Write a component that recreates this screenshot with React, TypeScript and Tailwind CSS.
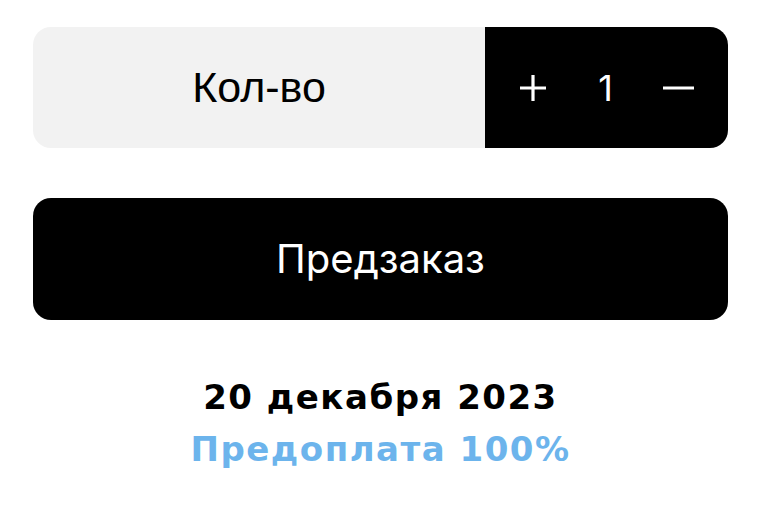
import { useState } from 'react';

export default function App() {
  const [qty, setQty] = useState(1);

  return (
    <div className="min-h-screen bg-white pl-[33px] pt-[27px] font-['Inter','Noto_Sans',sans-serif]">
      <div className="w-[695px]">
        <div className="flex h-[121px] overflow-hidden rounded-[18px]">
          <div className="flex flex-1 items-center justify-center bg-[#f2f2f2] text-[43px] text-black font-['Liberation_Sans',sans-serif]">
            Кол-во
          </div>
          <div className="flex w-[243px] items-center justify-between bg-black pl-[33px] pr-[34px] text-white">
            <button onClick={() => setQty((q) => q + 1)} aria-label="Добавить">
              <svg width="30" height="30" viewBox="0 0 30 30" stroke="currentColor" strokeWidth="3.2" fill="none">
                <path d="M15 2v26M2 15h26" />
              </svg>
            </button>
            <span className="text-[36px] leading-none">{qty}</span>
            <button onClick={() => setQty((q) => Math.max(1, q - 1))} aria-label="Убрать">
              <svg width="31" height="30" viewBox="0 0 31 30" stroke="currentColor" strokeWidth="3.2" fill="none">
                <path d="M0 15h31" />
              </svg>
            </button>
          </div>
        </div>

        <button className="mt-[50px] flex h-[122px] w-full items-center justify-center rounded-[18px] bg-black text-[40px] text-white">
          Предзаказ
        </button>

        <div className="mt-[51px] text-center font-bold leading-[52px] tracking-[1.5px] font-['DejaVu_Sans',sans-serif]">
          <div className="text-[34px] text-black">20 декабря 2023</div>
          <div className="text-[34px] text-[#6cb4ec]">Предоплата 100%</div>
        </div>
      </div>
    </div>
  );
}
